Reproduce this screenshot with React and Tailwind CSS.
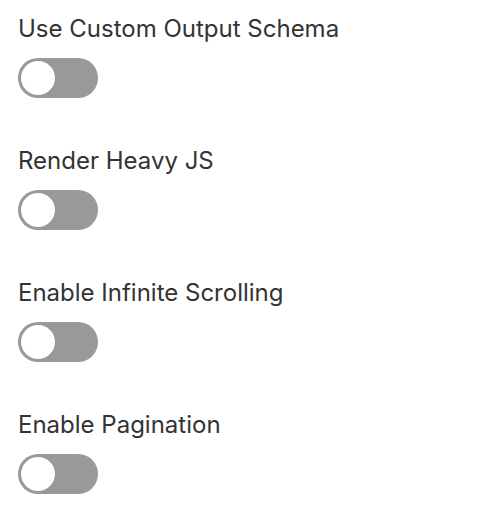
const options = [
  'Use Custom Output Schema',
  'Render Heavy JS',
  'Enable Infinite Scrolling',
  'Enable Pagination',
];

const Toggle = () => (
  <button
    type="button"
    className="w-[80px] h-[40px] rounded-full bg-[#999999] p-[3px] flex items-center"
  >
    <span className="w-[34px] h-[34px] rounded-full bg-white block" />
  </button>
);

export default function App() {
  return (
    <div className="min-h-screen bg-white pl-[18px] pt-[13px] font-['Inter',sans-serif]">
      <div className="flex flex-col gap-[47px]">
        {options.map((label) => (
          <div key={label} className="flex flex-col gap-[13px]">
            <p className="text-[24px] leading-[32px] text-[#333333]">{label}</p>
            <Toggle />
          </div>
        ))}
      </div>
    </div>
  );
}
